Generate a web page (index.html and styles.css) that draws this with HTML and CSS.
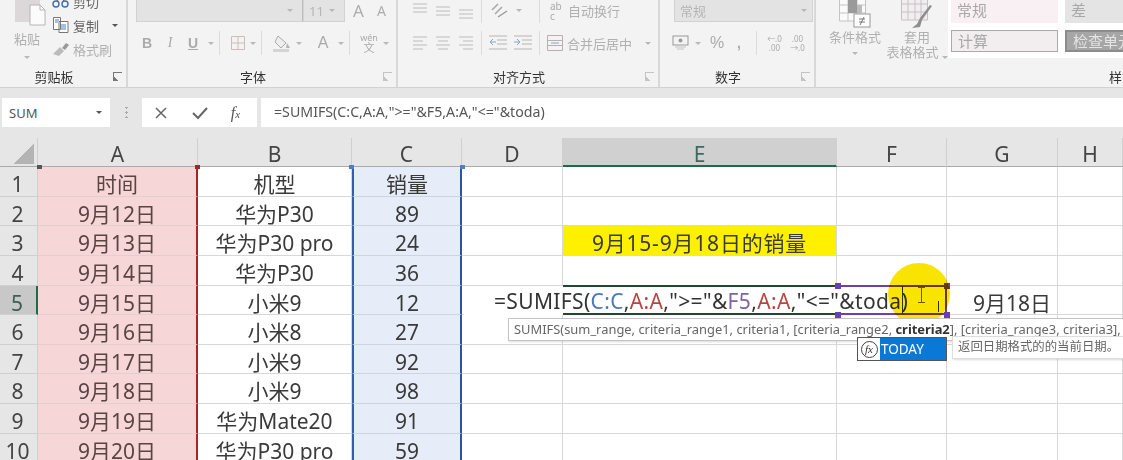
FILE: index.html
```html
<!DOCTYPE html>
<html lang="zh-CN">
<head>
  <meta charset="UTF-8">
  <title>SUMIFS</title>
  <link rel="stylesheet" href="styles.css">
</head>
<body>
  <div class="ribbon">
    <div class="group clipboard">
      <div class="group-body">
        <div class="paste">
          <svg width="34" height="30" viewBox="0 0 34 30"><rect x="0" y="-6" width="25" height="31" fill="#dcd8da"/><path d="M15 8h10l5 5v15H15z" fill="#fbfbfb" stroke="#b5b5b5"/><path d="M25 8v5h5" fill="none" stroke="#b5b5b5"/></svg>
          <span class="dim-text">粘贴</span>
          <i class="caret"></i>
        </div>
        <div class="clip-list">
          <div class="clip-item">
            <svg width="18" height="14" viewBox="0 0 18 14"><circle cx="4" cy="10" r="3" fill="none" stroke="#3f6fa8" stroke-width="1.4"/><circle cx="13" cy="10" r="3" fill="none" stroke="#3f6fa8" stroke-width="1.4"/><path d="M5 7l6-9M12 7L6-2" stroke="#666" stroke-width="1.2"/></svg>
            <span class="dark-text">剪切</span>
          </div>
          <div class="clip-item">
            <svg width="18" height="18" viewBox="0 0 18 18"><path d="M1.500 1.500h7v12h-7zM7 5.500h9v11H7z" fill="#fff" stroke="#777"/><path d="M9 9h5M9 11h5M9 13h5M3 4h4M3 6h3" stroke="#4c7fb5"/></svg>
            <span class="dark-text">复制</span>
            <i class="caret dark"></i>
          </div>
          <div class="clip-item">
            <svg width="18" height="16" viewBox="0 0 18 16"><path d="M1 13l7-7 4 4-5 5z" fill="#bbb"/><path d="M10 7l4-5 3 2-4 5z" fill="#999"/></svg>
            <span class="dim-text">格式刷</span>
          </div>
        </div>
      </div>
      <div class="group-label"><span></span><b>剪贴板</b><i class="launcher dark"></i></div>
    </div>

    <div class="group font">
      <div class="group-body">
        <div class="tool-row top">
          <div class="combo font-name"><i class="caret"></i></div>
          <div class="combo font-size"><span>11</span><i class="caret"></i></div>
          <span class="big-a up">A</span>
          <span class="big-a down">A</span>
        </div>
        <div class="tool-row">
          <span class="tool bold">B</span>
          <span class="tool italic">I</span>
          <span class="tool under">U</span>
          <i class="caret"></i>
          <i class="sep"></i>
          <svg width="16" height="16" viewBox="0 0 16 16"><path d="M1.500 1.500h13v13h-13zM8 1.500v13M1.500 8h13" fill="none" stroke="#cdbcbc"/></svg>
          <i class="caret"></i>
          <i class="sep"></i>
          <svg width="20" height="18" viewBox="0 0 20 18"><path d="M6 2l8 7-5 5-6-6z" fill="#eee" stroke="#aaa"/><path d="M15 9l3 5h-4z" fill="#b5b5b5"/><rect x="1" y="15" width="16" height="3" fill="#d4d4d4"/></svg>
          <i class="caret"></i>
          <span class="tool font-color">A</span>
          <i class="caret"></i>
          <i class="sep"></i>
          <span class="wen"><small>wén</small>文</span>
          <i class="caret"></i>
        </div>
      </div>
      <div class="group-label"><span></span><b>字体</b><i class="launcher"></i></div>
    </div>

    <div class="group align">
      <div class="group-body">
        <div class="tool-row top">
          <svg class="lines" width="16" height="16" viewBox="0 0 16 16"><path d="M1 1h14M1 5h14M1 9h14"/></svg>
          <svg class="lines" width="16" height="16" viewBox="0 0 16 16"><path d="M1 4h14M1 8h14M1 12h14"/></svg>
          <svg class="lines" width="16" height="16" viewBox="0 0 16 16"><path d="M1 7h14M1 11h14M1 15h14"/></svg>
          <i class="sep"></i>
          <svg width="20" height="20" viewBox="0 0 20 20"><path d="M3 9l6-6M6 13l7-7" stroke="#aaa" stroke-width="1.600"/><path d="M9 16l9-6" stroke="#999" stroke-width="1.400"/></svg>
          <i class="caret"></i>
          <i class="sep"></i>
          <span class="wrap-icon">ab<br>c</span>
          <span class="dim-text wrap-text">自动换行</span>
        </div>
        <div class="tool-row">
          <svg class="lines" width="16" height="16" viewBox="0 0 16 16"><path d="M1 2h14M1 6h10M1 10h14M1 14h10"/></svg>
          <svg class="lines" width="16" height="16" viewBox="0 0 16 16"><path d="M1 2h14M3 6h10M1 10h14M3 14h10"/></svg>
          <svg class="lines" width="16" height="16" viewBox="0 0 16 16"><path d="M1 2h14M5 6h10M1 10h14M5 14h10"/></svg>
          <i class="sep"></i>
          <svg width="18" height="16" viewBox="0 0 18 16"><path d="M0 1h18M8 5h10M8 9h10M0 14h18" stroke="#b5b5b5"/><path d="M7 7H1m3-3L1 7l3 3" fill="none" stroke="#8aa3bf"/></svg>
          <svg width="18" height="16" viewBox="0 0 18 16"><path d="M0 1h18M8 5h10M8 9h10M0 14h18" stroke="#b5b5b5"/><path d="M0 7h6M3 4l3 3-3 3" fill="none" stroke="#8aa3bf"/></svg>
          <i class="sep"></i>
          <svg width="16" height="16" viewBox="0 0 16 16"><path d="M.5.500h15v15H.5zM.5 5.500h15M.5 10.500h15" fill="none" stroke="#b8b0b0"/><path d="M4 8h8" stroke="#8aa3bf"/></svg>
          <span class="dim-text merge-text">合并后居中</span>
          <i class="caret"></i>
        </div>
      </div>
      <div class="group-label"><span></span><b>对齐方式</b><i class="launcher"></i></div>
    </div>

    <div class="group number">
      <div class="group-body">
        <div class="tool-row top">
          <div class="combo number-format"><span>常规</span><i class="caret"></i></div>
        </div>
        <div class="tool-row">
          <svg width="17" height="17" viewBox="0 0 17 17"><rect x="1" y="1" width="15" height="9" fill="none" stroke="#999"/><circle cx="8.500" cy="5.500" r="2" fill="#999"/><path d="M3 12h11M5 14h7" stroke="#c4c4c4"/></svg>
          <i class="caret"></i>
          <span class="tool percent">%</span>
          <span class="tool comma">,</span>
          <i class="sep"></i>
          <span class="decimal">←.0<br>.00</span>
          <span class="decimal">.00<br>→.0</span>
        </div>
      </div>
      <div class="group-label"><span></span><b>数字</b><i class="launcher"></i></div>
    </div>

    <div class="group styles">
      <div class="group-body">
        <div class="style-btn">
          <svg width="32" height="28" viewBox="0 0 32 28"><path d="M.5-4h26v25H.5zM9-4v25M18-4v25M.5 5h26M.5 13h26" fill="#fafafa" stroke="#c4c4c4"/><rect x="9" y="0" width="9" height="13" fill="#9a9a9a"/><rect x="18" y="5" width="5" height="8" fill="#bbb"/><rect x="15" y="14" width="16" height="13" fill="#fff" stroke="#999"/><path d="M20 19h6M20 22h6M25 17l-4 8" stroke="#777"/></svg>
          <span class="dim-text">条件格式</span>
          <i class="caret"></i>
        </div>
        <div class="style-btn">
          <svg width="32" height="28" viewBox="0 0 32 28"><path d="M.5-4h26v24H.5zM7-4v24M14-4v24M20-4v24M.5 4h26M.5 12h26" fill="#f1eef0" stroke="#c8c0c4"/><path d="M31 6L21 20l-2 7-8 1 5-4 3-6 10-13z" fill="#8e8e8e"/></svg>
          <span class="dim-text">套用</span>
          <span class="dim-text">表格格式<i class="caret inline"></i></span>
        </div>
        <div class="gallery">
          <div class="swatch normal">常规</div>
          <div class="swatch bad">差</div>
          <div class="swatch calc">计算</div>
          <div class="swatch check">检查单元</div>
        </div>
      </div>
      <div class="group-label"><span></span><b>样式</b><span></span></div>
    </div>
  </div>

  <div class="formula-bar">
    <div class="name-box"><span>SUM</span><i class="caret dark"></i></div>
    <div class="grip"></div>
    <div class="fx-box">
      <svg width="16" height="16" viewBox="0 0 16 16"><path d="M3 3l10 10M13 3L3 13" stroke="#666" stroke-width="1.500"/></svg>
      <svg width="18" height="16" viewBox="0 0 18 16"><path d="M2 8l5 5 9-10" fill="none" stroke="#666" stroke-width="2"/></svg>
      <em>f<small>x</small></em>
    </div>
    <div class="formula-input">=SUMIFS(C:C,A:A,"&gt;="&amp;F5,A:A,"&lt;="&amp;toda)</div>
  </div>

  <div class="sheet">
    <div class="cells">
      <div class="corner"><i></i></div>
      <div class="col-head">A</div><div class="col-head">B</div><div class="col-head">C</div><div class="col-head">D</div><div class="col-head on">E</div><div class="col-head">F</div><div class="col-head">G</div><div class="col-head">H</div>

      <div class="row-head">1</div><div class="cell red">时间</div><div class="cell">机型</div><div class="cell blue">销量</div><div class="cell"></div><div class="cell"></div><div class="cell"></div><div class="cell"></div><div class="cell"></div>
      <div class="row-head">2</div><div class="cell red">9月12日</div><div class="cell">华为P30</div><div class="cell blue">89</div><div class="cell"></div><div class="cell"></div><div class="cell"></div><div class="cell"></div><div class="cell"></div>
      <div class="row-head">3</div><div class="cell red">9月13日</div><div class="cell">华为P30 pro</div><div class="cell blue">24</div><div class="cell"></div><div class="cell yellow">9月15-9月18日的销量</div><div class="cell"></div><div class="cell"></div><div class="cell"></div>
      <div class="row-head">4</div><div class="cell red">9月14日</div><div class="cell">华为P30</div><div class="cell blue">36</div><div class="cell"></div><div class="cell"></div><div class="cell"></div><div class="cell"></div><div class="cell"></div>
      <div class="row-head on">5</div><div class="cell red">9月15日</div><div class="cell">小米9</div><div class="cell blue">12</div><div class="cell"></div><div class="cell"></div><div class="cell"></div><div class="cell shifted">9月18日</div><div class="cell"></div>
      <div class="row-head">6</div><div class="cell red">9月16日</div><div class="cell">小米8</div><div class="cell blue">27</div><div class="cell"></div><div class="cell"></div><div class="cell"></div><div class="cell"></div><div class="cell"></div>
      <div class="row-head">7</div><div class="cell red">9月17日</div><div class="cell">小米9</div><div class="cell blue">92</div><div class="cell"></div><div class="cell"></div><div class="cell"></div><div class="cell"></div><div class="cell"></div>
      <div class="row-head">8</div><div class="cell red">9月18日</div><div class="cell">小米9</div><div class="cell blue">98</div><div class="cell"></div><div class="cell"></div><div class="cell"></div><div class="cell"></div><div class="cell"></div>
      <div class="row-head">9</div><div class="cell red">9月19日</div><div class="cell">华为Mate20</div><div class="cell blue">91</div><div class="cell"></div><div class="cell"></div><div class="cell"></div><div class="cell"></div><div class="cell"></div>
      <div class="row-head">10</div><div class="cell red">9月20日</div><div class="cell">华为P30 pro</div><div class="cell blue">59</div><div class="cell"></div><div class="cell"></div><div class="cell"></div><div class="cell"></div><div class="cell"></div>
    </div>

    <!-- things lying over the grid -->
    <div class="sel-mark m1"></div>
    <div class="sel-mark m2"></div>
    <div class="sel-mark m3"></div>
    <div class="sel-mark m4"></div>
    <div class="edit-box">=SUMIFS(<span class="ref-c">C:C</span>,<span class="ref-a">A:A</span>,"&gt;="&amp;<span class="ref-f">F5</span>,<span class="ref-a">A:A</span>,"&lt;="&amp;toda)</div>
    <div class="edit-frame"></div>
    <div class="edit-frame-f"></div>
    <div class="handle h1"></div>
    <div class="handle h2"></div>
    <div class="handle h3"></div>
    <div class="handle h4"></div>
    <div class="caret-line"></div>
    <div class="caret-line second"></div>
    <div class="ibeam"></div>
    <div class="spot"></div>
    <div class="hint">SUMIFS(sum_range, criteria_range1, criteria1, [criteria_range2, <b>criteria2</b>], [criteria_range3, criteria3],</div>
    <div class="auto"><span class="auto-icon"><em>fx</em></span><span class="auto-name">TODAY</span></div>
    <div class="desc">返回日期格式的的当前日期。</div>
  </div>
</body>
</html>
```

FILE: styles.css
```css
* {
  box-sizing: border-box;
}

html, body {
  margin: 0;
  height: 460px;
  overflow: hidden;
}

body {
  width: 1123px;
  background-color: #e6e6e6;
  font-family: "Noto Sans", "Noto Sans CJK SC", sans-serif;
  color: #3c3c3c;
}

i {
  display: block;
  font-style: normal;
}

/* ribbon */
.ribbon {
  display: flex;
  height: 88px;
  background-color: #f3f3f3;
  border-bottom: 1px solid #d2d2d2;
  overflow: hidden;
  filter: blur(0.35px);
}

.group {
  display: flex;
  flex-direction: column;
  flex-shrink: 0;
  border-right: 2px solid #d8d8d8;
}

.group.clipboard { width: 128px; }
.group.font { width: 270px; }
.group.align { width: 262px; }
.group.number { width: 156px; }
.group.styles { width: 630px; border-right: none; }

.group-body {
  height: 65px;
}

.group-label {
  display: grid;
  grid-template-columns: 1fr auto 1fr;
  align-items: center;
  height: 22px;
  padding-right: 4px;
  font-size: 13px;
}

.group-label b {
  margin-right: 14px;
  font-weight: 400;
  color: #333;
}

.launcher {
  justify-self: end;
  width: 9px;
  height: 9px;
  border-top: 1px solid #c4c4c4;
  border-left: 1px solid #c4c4c4;
  background: linear-gradient(45deg, #c4c4c4 30%, transparent 30%);
}

.launcher.dark {
  border-color: #777;
  background: linear-gradient(45deg, #777 30%, transparent 30%);
}

.caret {
  flex-shrink: 0;
  width: 0;
  height: 0;
  border-left: 3px solid transparent;
  border-right: 3px solid transparent;
  border-top: 3px solid #b8b8b8;
}

.caret.dark {
  border-top-color: #555;
}

.caret.inline {
  display: inline-block;
  margin-left: 3px;
  vertical-align: middle;
}

.sep {
  flex-shrink: 0;
  width: 1px;
  height: 24px;
  background-color: #dcdcdc;
}

.dim-text {
  font-size: 13px;
  color: #b0b0b0;
  white-space: nowrap;
}

.dark-text {
  font-size: 13px;
  color: #666;
}

.clipboard .group-body {
  display: flex;
}

.paste {
  display: flex;
  flex-direction: column;
  align-items: center;
  width: 46px;
  margin-left: 4px;
  margin-top: -3px;
}

.paste svg {
  margin-left: 10px;
}

.paste .dim-text {
  margin-top: 2px;
  line-height: 20px;
}

.paste .caret {
  margin-top: 7px;
}

.clip-list {
  display: flex;
  flex-direction: column;
  margin-top: -11px;
  margin-left: 2px;
}

.clip-item {
  display: flex;
  align-items: center;
  gap: 3px;
  height: 24px;
}

.clip-item .caret {
  margin-left: 10px;
}

.tool-row {
  display: flex;
  align-items: center;
  height: 24px;
  margin-top: 9px;
  padding-left: 8px;
}

.tool-row.top {
  margin-top: -1px;
  height: 23px;
}

.combo {
  display: flex;
  align-items: center;
  justify-content: space-between;
  height: 23px;
  padding: 0 5px;
  background-color: #e3e3e3;
  border: 1px solid #d2d2d2;
  font-size: 13px;
  color: #b5b5b5;
}

.combo.font-name { width: 167px; justify-content: flex-end; border-right: 1px solid #bdbdbd; }
.combo.font-size { width: 42px; }
.combo.number-format { width: 139px; margin-left: 2px; }

.big-a {
  font-size: 17px;
  color: #aeaeae;
}

.big-a.up { margin-left: 8px; }
.big-a.down { margin-left: 13px; font-size: 14px; }

.tool {
  display: block;
  text-align: center;
  font-size: 14px;
  color: #aaa;
  font-family: "Liberation Sans", sans-serif;
}

.tool.bold { width: 22px; font-weight: 700; }
.tool.italic { width: 24px; font-style: italic; font-family: "Liberation Serif", serif; }
.tool.under { width: 22px; text-decoration: underline; font-weight: 700; }
.tool.font-color { width: 22px; margin-left: 6px; font-size: 16px; }
.tool.percent { width: 26px; margin-left: 3px; font-size: 16px; }
.tool.comma { width: 18px; font-weight: 700; }

.font .tool-row .caret { margin: 0 4px; }
.font .tool-row svg { margin-left: 9px; }
.font .tool-row .sep { margin: 0 1px; }

.wen {
  margin-left: 8px;
  width: 20px;
  text-align: center;
  font-size: 11px;
  line-height: 10px;
  color: #aaa;
}

.wen small {
  display: block;
  font-size: 9px;
}

.lines {
  fill: none;
  stroke: #bcbcbc;
  flex-shrink: 0;
}

.align .tool-row {
  gap: 7px;
  padding-left: 14px;
}

.align .tool-row.top .caret {
  margin-right: 10px;
}

.wrap-icon {
  width: 13px;
  margin-left: 3px;
  font-size: 10px;
  line-height: 10px;
  color: #aaa;
}

.wrap-text { margin-left: -2px; }

.merge-text { margin-left: -3px; margin-right: 6px; }

.number .tool-row {
  padding-left: 12px;
}

.number .tool-row .caret { margin-left: 6px; }
.number .tool-row .sep { margin: 0 6px 0 8px; }

.number-format span {
  color: #b5b5b5;
}

.decimal {
  width: 23px;
  font-size: 8px;
  line-height: 9px;
  color: #aaa;
  text-align: center;
  white-space: nowrap;
}

.styles .group-body {
  display: flex;
}

.style-btn {
  display: flex;
  flex-direction: column;
  align-items: center;
  width: 62px;
  margin-top: 0;
  line-height: 15px;
}

.style-btn .dim-text:first-of-type {
  margin-top: 1px;
  line-height: 16px;
}

.style-btn:first-child {
  margin-left: 8px;
}

.style-btn .caret {
  margin-top: 7px;
}

.gallery {
  display: grid;
  grid-template-columns: 107px 107px;
  grid-template-rows: 23px 22px;
  gap: 7px;
  width: 226px;
  height: 58px;
  padding: 0 3px;
  background-color: #fff;
}

.swatch {
  padding-left: 6px;
  font-size: 15px;
  line-height: 21px;
  color: #a8a8a8;
  white-space: nowrap;
  overflow: hidden;
}

.swatch.normal { background-color: #f8f0f2; }
.swatch.bad { background-color: #e4e4e4; }
.swatch.calc { background-color: #f2eef0; border: 1px solid #aaa; line-height: 20px; }
.swatch.check { background-color: #a6a6a6; border: 2px solid #8c8c8c; line-height: 18px; color: #e4e4e4; }

/* formula bar */
.formula-bar {
  display: flex;
  align-items: stretch;
  height: 29px;
  margin-top: 10px;
  filter: blur(0.3px);
}

.name-box {
  display: flex;
  align-items: center;
  justify-content: space-between;
  width: 108px;
  margin-left: 2px;
  padding: 0 8px 0 7px;
  background-color: #fff;
  font-size: 13px;
  color: #555;
}

.grip {
  width: 32px;
  margin: 9px 0;
  background: radial-gradient(circle, #aaa 1px, transparent 1.200px) center / 3px 5px repeat-y;
}

.fx-box {
  display: flex;
  align-items: center;
  justify-content: space-around;
  width: 115px;
  padding: 0 6px 0 0;
  background-color: #fff;
}

.fx-box em {
  font-family: "Liberation Serif", serif;
  font-size: 16px;
  color: #555;
}

.fx-box small {
  font-size: 11px;
}

.formula-input {
  flex: 1;
  margin-left: 4px;
  padding-left: 13px;
  background-color: #fff;
  font-size: 14.200px;
  line-height: 28px;
  color: #555;
  white-space: nowrap;
}

/* sheet */
.sheet {
  position: relative;
  height: 322px;
  margin-top: 11px;
  overflow: hidden;
  background-color: #fff;
  filter: blur(0.4px);
}

.cells {
  display: grid;
  grid-template-columns: 38px 160px 154px 110px 101px 274px 110px 111px 65px;
  grid-template-rows: 29px repeat(10, 29.650px);
}

.corner {
  background-color: #e6e6e6;
  border-right: 1px solid #cfcfcf;
  border-bottom: 1px solid #aaa;
}

.corner i {
  width: 20px;
  height: 20px;
  margin: 6px 0 0 14px;
  background: linear-gradient(135deg, transparent 50%, #b4b4b4 50%);
}

.col-head {
  background-color: #e6e6e6;
  border-right: 1px solid #cfcfcf;
  border-bottom: 1px solid #aaa;
  text-align: center;
  font-size: 21px;
  line-height: 32px;
  color: #444;
}

.col-head.on {
  background-color: #d0d0d0;
  border-bottom: 2px solid #1f6b45;
  color: #3d6a5d;
}

.row-head {
  padding-top: 2px;
  padding-right: 2px;
  background-color: #e6e6e6;
  border-right: 1px solid #cfcfcf;
  border-bottom: 1px solid #cfcfcf;
  text-align: center;
  font-size: 21px;
  line-height: 30px;
  color: #444;
}

.row-head.on {
  background-color: #c8c8c8;
  border-right: 2px solid #1f6b45;
  color: #3b5f50;
}

.cell {
  padding-top: 2px;
  border-right: 1px solid #d8d8d8;
  border-bottom: 1px solid #d8d8d8;
  text-align: center;
  font-size: 21px;
  line-height: 30px;
  color: #3a3a3a;
  white-space: nowrap;
}

.cell.red {
  background-color: #f6d6d6;
  border-right: 2px solid #a82525;
  border-bottom-color: #e3cfcf;
  color: #5a4444;
}

.cell.blue {
  background-color: #e6edf8;
  border-left: 2px solid #2f5fb0;
  border-right: 2px solid #2a55a5;
  border-bottom-color: #cdd5e2;
}

.cell.yellow {
  background-color: #fff000;
  font-size: 21px;
  letter-spacing: 0.800px;
}

.cell.shifted {
  padding-left: 20px;
}

.sel-mark {
  position: absolute;
  top: 27px;
  width: 5px;
  height: 4px;
}

.m1 { left: 37px; background-color: #555; }
.m2 { left: 195px; background-color: #a82525; }
.m3 { left: 349px; background-color: #4f7fc4; }
.m4 { left: 460px; background-color: #4f7fc4; }

.edit-box {
  position: absolute;
  left: 464px;
  top: 148px;
  width: 483px;
  height: 29px;
  padding-left: 30px;
  background-color: #fff;
  font-size: 21px;
  letter-spacing: 0.350px;
  line-height: 30px;
  color: #333;
  white-space: nowrap;
}

.ref-c { color: #4a7ab8; }
.ref-a { color: #b8453f; }
.ref-f { color: #8064a2; }

.spot {
  position: absolute;
  left: 888px;
  top: 125px;
  width: 62px;
  height: 62px;
  border-radius: 50%;
  background-color: #f8e400;
  mix-blend-mode: multiply;
}

.edit-frame {
  position: absolute;
  left: 563px;
  top: 147px;
  width: 274px;
  height: 30px;
  border-top: 2px solid #24452f;
  border-bottom: 2px solid #24452f;
}

.edit-frame-f {
  position: absolute;
  left: 837px;
  top: 147px;
  width: 110px;
  height: 30px;
  border: 2px solid #6a3fb5;
  border-left: none;
}

.handle {
  position: absolute;
  width: 6px;
  height: 6px;
  background-color: #6a3fb5;
}

.h1 { left: 835px; top: 145px; }
.h2 { left: 835px; top: 174px; }
.h3 { left: 944px; top: 145px; }
.h4 { left: 944px; top: 174px; }

.caret-line {
  position: absolute;
  left: 902px;
  top: 148px;
  width: 1px;
  height: 28px;
  background-color: #333;
}

.caret-line.second {
  left: 938px;
  top: 163px;
  height: 11px;
}

.ibeam {
  position: absolute;
  left: 918px;
  top: 149px;
  width: 7px;
  height: 16px;
  border-top: 1px solid #666;
  border-bottom: 1px solid #666;
  background: linear-gradient(#666, #666) center / 1px 100% no-repeat;
}

.hint {
  position: absolute;
  left: 508px;
  top: 180px;
  width: 640px;
  height: 23px;
  padding-left: 5px;
  background-color: #fff;
  border: 1px solid #c4c4c4;
  box-shadow: 1px 1px 2px rgba(0, 0, 0, 0.15);
  font-size: 12.900px;
  line-height: 20px;
  color: #666;
  white-space: nowrap;
}

.hint b {
  color: #333;
}

.auto {
  position: absolute;
  left: 857px;
  top: 199px;
  display: flex;
  width: 90px;
  height: 24px;
  background-color: #fff;
  border: 1px solid #555;
}

.auto-icon {
  display: flex;
  align-items: center;
  justify-content: center;
  width: 22px;
}

.auto-icon em {
  width: 17px;
  height: 17px;
  border: 1px solid #444;
  border-radius: 50%;
  font-family: "Liberation Serif", serif;
  font-size: 11px;
  line-height: 14px;
  text-align: center;
  color: #333;
}

.auto-name {
  flex: 1;
  padding-left: 1px;
  background-color: #0a78d7;
  color: #fff;
  font-size: 13.500px;
  line-height: 22px;
}

.desc {
  position: absolute;
  left: 952px;
  top: 198px;
  width: 200px;
  height: 23px;
  padding-left: 5px;
  background-color: #fff;
  border: 1px solid #ddd;
  box-shadow: 1px 1px 2px rgba(0, 0, 0, 0.15);
  font-size: 12.400px;
  line-height: 20px;
  color: #666;
  white-space: nowrap;
}
```
